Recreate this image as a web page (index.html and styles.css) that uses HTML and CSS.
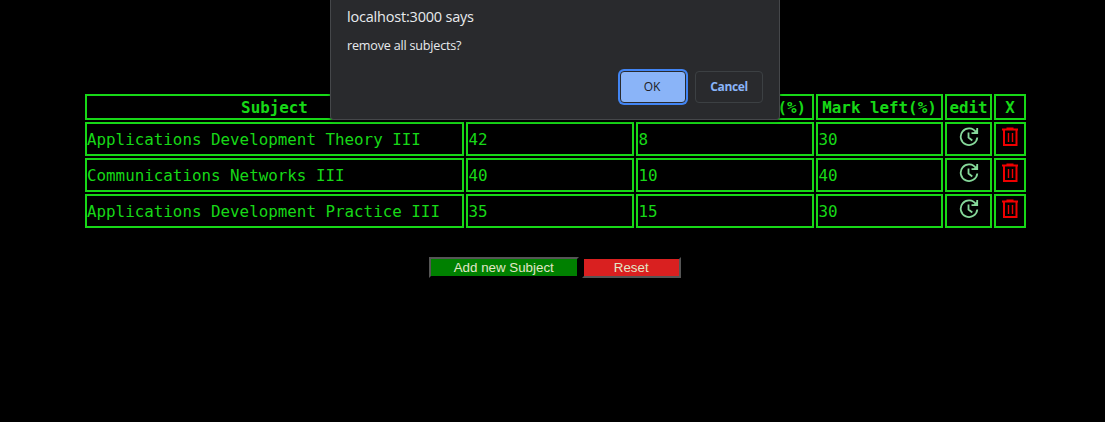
FILE: index.html
```html
<!DOCTYPE html>
<html lang="en">
<head>
<meta charset="utf-8">
<title>Subjects</title>
<link rel="stylesheet" href="styles.css">
</head>
<body>
<svg class="defs" width="0" height="0">
  <symbol id="update" viewBox="0 0 20 20"><path d="M17 5.200A8.300 8.300 0 1 0 18.300 10.500M12.500 6.200H18.200V1M9.500 5.500V10.500L13.300 13.500" fill="none" stroke="currentColor" stroke-width="1.800"/><path d="M14 6.500H18.500V2z" fill="currentColor"/></symbol>
  <symbol id="trash" viewBox="0 0 18 20"><path d="M1 2.500H17M5.500 1.500H12.500M3 3V18H15.500V3" fill="none" stroke="currentColor" stroke-width="2"/><path d="M7.500 6V15M11.500 6V15" fill="none" stroke="currentColor" stroke-width="1.400"/></symbol>
</svg>
<main class="page">
  <table class="subjects">
    <colgroup><col class="c-name"><col class="c-done"><col class="c-mark"><col class="c-left"><col class="c-edit"><col class="c-del"></colgroup>
    <thead><tr><th>Subject</th><th>Completed(%)</th><th>Mark achieved (%)</th><th>Mark left(%)</th><th>edit</th><th>X</th></tr></thead>
    <tbody>
      <tr><td>Applications Development Theory III</td><td>42</td><td>8</td><td>30</td><td class="action"><svg class="update"><use href="#update"/></svg></td><td class="action"><svg class="trash"><use href="#trash"/></svg></td></tr>
      <tr><td>Communications Networks III</td><td>40</td><td>10</td><td>40</td><td class="action"><svg class="update"><use href="#update"/></svg></td><td class="action"><svg class="trash"><use href="#trash"/></svg></td></tr>
      <tr><td>Applications Development Practice III</td><td>35</td><td>15</td><td>30</td><td class="action"><svg class="update"><use href="#update"/></svg></td><td class="action"><svg class="trash"><use href="#trash"/></svg></td></tr>
    </tbody>
  </table>
  <div class="buttons"><button class="add">Add new Subject</button><button class="reset">Reset</button></div>
</main>
<div class="dialog" role="dialog">
  <div class="title">localhost:3000 says</div>
  <div class="message">remove all subjects?</div>
  <div class="choices"><button class="ok">OK</button><button class="cancel">Cancel</button></div>
</div>
</body>
</html>
```
FILE: styles.css
```css
* { box-sizing: border-box; }
body { margin: 0; height: 422px; overflow: hidden; background: #000; }
.defs { display: block; }
.page { padding: 92px 0 0 83px; }
.subjects {
  width: 945px;
  table-layout: fixed;
  border-collapse: separate;
  border-spacing: 2px;
  color: #17d817;
  font: 15.850px/20px "DejaVu Sans Mono", monospace;
}
.c-name { width: 379px; }
.c-done { width: 168px; }
.c-mark { width: 178px; }
.c-left { width: 127px; }
.c-edit { width: 47px; }
.c-del { width: 32px; }
th, td { border: 2px solid #17d817; padding: 0; white-space: nowrap; }
th { height: 26px; padding-top: 1px; }
td { height: 34px; padding-top: 1px; }
td + td { padding-left: .5px; }
td.action { padding: 0; text-align: center; }
.action svg { display: block; margin: 0 auto 4px; }
.update { width: 20px; height: 20px; color: #86d99a; }
.trash { width: 18px; height: 20px; color: #f00000; }
.buttons { display: flex; gap: 3px; padding: 27px 0 0 346px; }
.buttons button {
  height: 21px;
  padding: 0;
  color: #e2e6c8;
  font: 13.333px/17px "Liberation Sans", Arial, sans-serif;
}
.add { width: 149.500px; background: #008000; border: 2px solid; border-color: #555 #000 #000 #555; }
.reset { width: 99.500px; background: #d92020; border: 2px solid; border-color: #000 #555 #555 #000; }
.dialog {
  position: absolute;
  top: 0;
  left: 330px;
  width: 450px;
  height: 120px;
  padding: 7px 16px 0;
  background: #292a2d;
  border: 1px solid #45474a;
  border-top: 0;
  border-radius: 0 0 4px 4px;
  color: #e8eaed;
  font-family: "Open Sans", "Noto Sans", sans-serif;
  box-shadow: 0 1px 3px #0008;
}
.title { font-size: 14.500px; line-height: 20px; letter-spacing: -.2px; }
.message { margin-top: 9px; padding-top: 1px; font-size: 12.600px; line-height: 18px; letter-spacing: -.2px; }
.choices { display: flex; justify-content: flex-end; gap: 9px; margin-top: 16px; }
.choices button {
  height: 32px;
  padding: 0;
  border-radius: 4px;
  font: 12px/28px "Open Sans", "Noto Sans", sans-serif;
}
.ok { width: 66px; background: #8ab4f8; color: #202124; border: 1px solid #292a2d; box-shadow: 0 0 0 2px #4285f4; }
.choices .ok { padding-right: 2px; }
.cancel { width: 68px; background: transparent; color: #8ab4f8; border: 1px solid #3c4043; }
.choices .cancel { font-weight: 700; letter-spacing: -.4px; }
```
